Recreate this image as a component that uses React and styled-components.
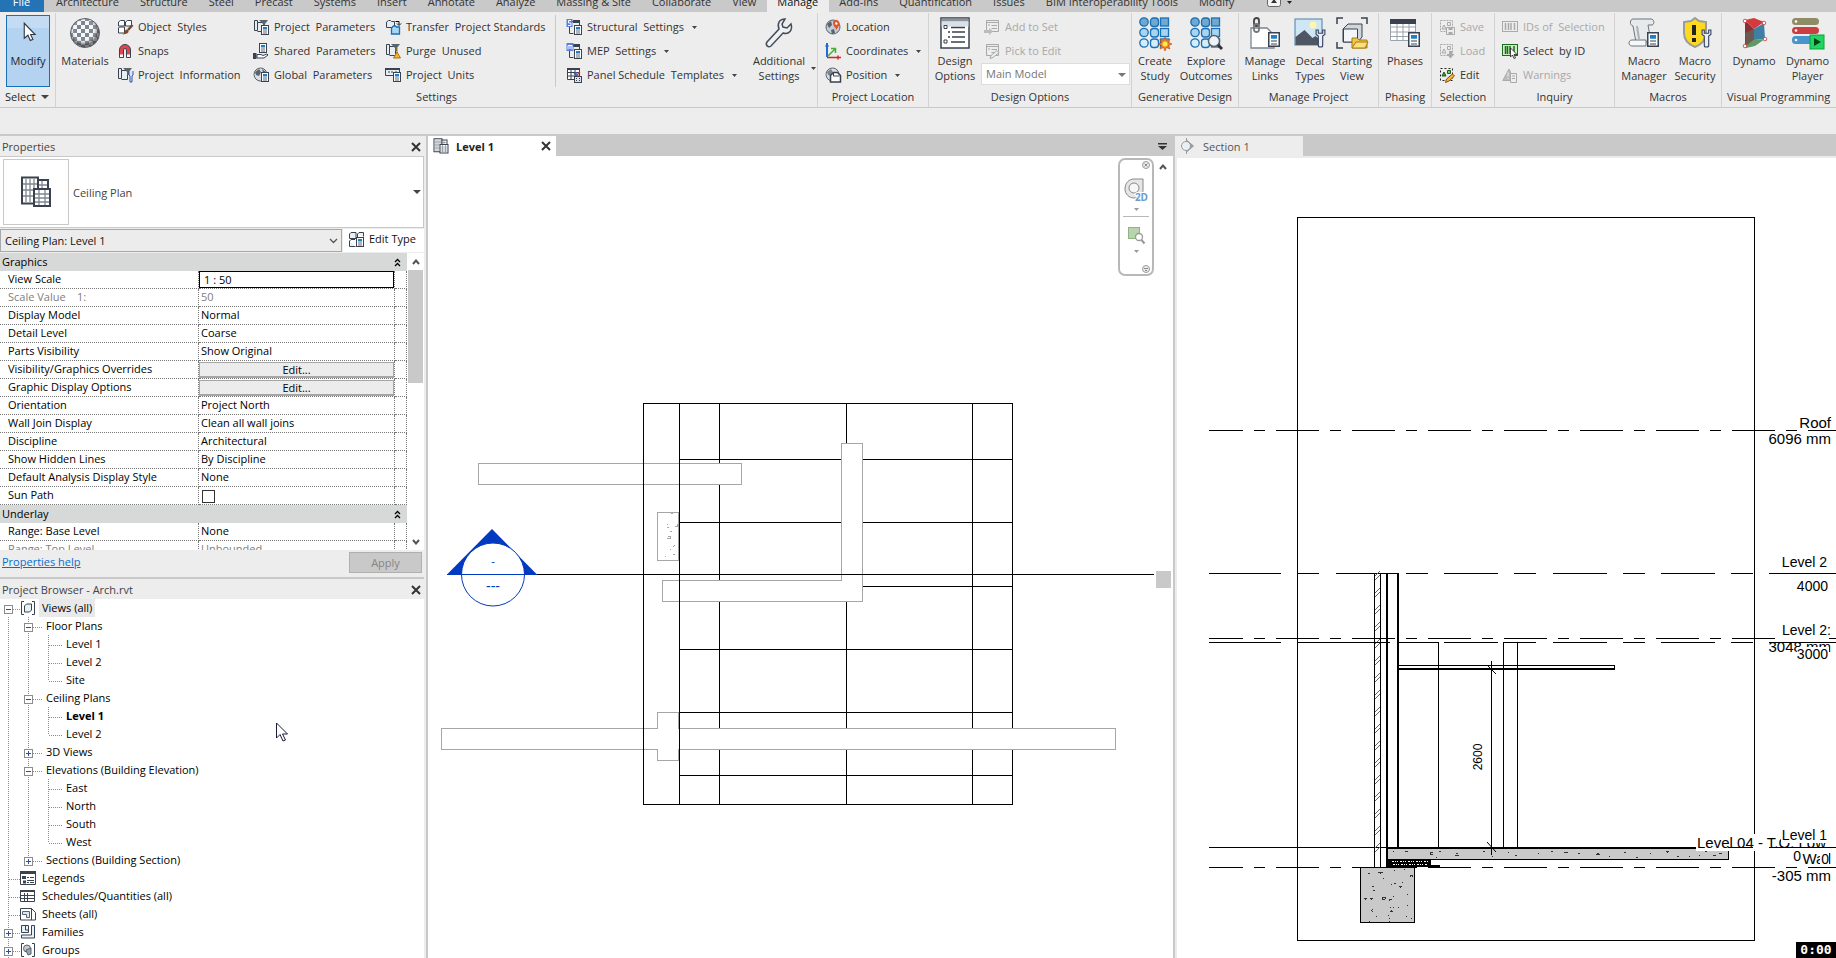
import { useState } from "react";
import styled, { createGlobalStyle } from "styled-components";

const GlobalStyle = createGlobalStyle`
  * { box-sizing: border-box; }
  html, body, #root { height: 100%; margin: 0; }
  body {
    background: #ededed;
    color: #262626;
    font-family: "Open Sans", "Noto Sans", sans-serif;
    font-size: 11px;
    line-height: 15px;
    overflow: hidden;
  }
  button, select, input { font: inherit; color: inherit; margin: 0; padding: 0; border: 0; background: none; border-radius: 0; }
  svg { display: block; flex: none; }
`;

const AppStyled = styled.div`
  display: flex;
  flex-direction: column;
  height: 100vh;
  position: relative;
`;

/* ---------- ribbon ---------- */

const TabStripStyled = styled.nav`
  display: flex;
  flex: none;
  align-items: flex-end;
  height: 12px;
  overflow: hidden;
  background: #c9c9c9;
`;

const TabStyled = styled.button`
  flex: none;
  height: 20px;
  padding: 0 11px 0 10px;
  line-height: 18px;
  color: ${({ $active, $file }) => ($file ? "#fff" : $active ? "#111" : "#333")};
  background: ${({ $active, $file }) => ($file ? "#2474b5" : $active ? "#ededed" : "transparent")};
  ${({ $file }) => $file && "width: 44px; margin-right: 2px;"}
`;

const TabToggleStyled = styled.button`
  display: flex;
  align-items: center;
  gap: 6px;
  height: 20px;
  margin-left: 22px;
`;

const RibbonStyled = styled.section`
  display: flex;
  flex: none;
  height: 96px;
  padding-top: 1px;
  border-bottom: 1px solid #c9c9c9;
  background: #ededed;
`;

const PanelStyled = styled.div`
  display: flex;
  flex: ${({ $w }) => ($w ? `0 0 ${$w}px` : "1 0 0")};
  flex-direction: column;
  justify-content: space-between;
  border-right: 1px solid ${({ $w }) => ($w ? "#d2d2d2" : "transparent")};
`;

const PanelBodyStyled = styled.div`
  display: flex;
  height: 74px;
  padding-top: 2px;
  padding-left: ${({ $pad }) => ($pad ? "4px" : "0")};
`;

const PanelTitleStyled = styled.div`
  height: 19px;
  line-height: 17px;
  text-align: center;
  white-space: nowrap;
  color: #333;
`;

const TitleMenuStyled = styled.button`
  display: flex;
  align-items: center;
  gap: 6px;
  height: 19px;
  padding-left: 5px;
  padding-bottom: 2px;
`;

const ModifyStyled = styled.button`
  display: flex;
  flex-direction: column;
  align-items: center;
  gap: 8px;
  width: 44px;
  height: 72px;
  margin-left: 6px;
  padding-top: 5px;
  border: 1px solid #1a70b8;
  background: linear-gradient(#c3dbf3 12px, #b3d3f0 12px);
`;

const BigButtonStyled = styled.button`
  display: flex;
  flex: 0 0 ${({ $w }) => $w}px;
  flex-direction: column;
  align-items: center;
  gap: 4px;
  height: 72px;
  padding-top: 2px;
  color: #333;
  white-space: nowrap;
`;

const BigLabelStyled = styled.span`
  display: flex;
  flex-direction: column;
  align-items: center;
`;

const CaretSlotStyled = styled.span`
  display: flex;
  align-items: flex-end;
  height: 72px;
  padding-bottom: 17px;
`;

const ColumnStyled = styled.div`
  display: grid;
  grid-template-rows: repeat(3, 24px);
  flex: 0 0 ${({ $w }) => $w}px;
`;

const SmallButtonStyled = styled.button`
  display: flex;
  align-items: center;
  gap: 5px;
  padding-left: 3px;
  white-space: pre;
  color: #333;

  &:disabled {
    color: #a8a8a8;
  }
`;

const SmallLabelStyled = styled.span`
  padding-bottom: 2px;
`;

const DividerStyled = styled.span`
  flex: 0 0 1px;
  height: 72px;
  margin-right: 7px;
  background: #c9c9c9;
`;

const SelectWrapStyled = styled.label`
  position: relative;
  display: block;
  min-width: 0;
  flex: ${({ $grow }) => ($grow ? 1 : "none")};
`;

const SelectStyled = styled.select`
  display: block;
  appearance: none;
  width: 100%;
  height: ${({ $ribbon }) => ($ribbon ? "22px" : "23px")};
  padding: ${({ $ribbon }) => ($ribbon ? "0 4px 2px" : "0 4px")};
  border: 1px solid ${({ $ribbon }) => ($ribbon ? "#dcdcdc" : "#a8a8a8")};
  background: ${({ $ribbon }) => ($ribbon ? "#fff" : "#ececec")};
  opacity: 1;
  color: ${({ $ribbon }) => ($ribbon ? "#757575" : "#111")};
`;

const SelectArrowStyled = styled.span`
  position: absolute;
  right: 4px;
  top: 0;
  display: flex;
  align-items: center;
  height: 100%;
  pointer-events: none;
`;

/* ---------- side palettes ---------- */

const WorkspaceStyled = styled.main`
  display: flex;
  flex: 1;
  min-height: 0;
  margin-top: 26px;
  border-top: 2px solid #c9c9c9;
`;

const SideStyled = styled.aside`
  display: flex;
  flex: 0 0 428px;
  flex-direction: column;
  min-height: 0;
  padding-right: 2px;
  border-right: 2px solid #c9c9c9;
`;

const PaletteHeaderStyled = styled.header`
  display: flex;
  flex: none;
  align-items: center;
  justify-content: space-between;
  height: 20px;
  padding: 1px 3px 0 2px;
  color: #444;
`;

const TypeBoxStyled = styled.div`
  display: flex;
  flex: none;
  align-items: center;
  height: 72px;
  padding: 2px;
  border: 1px solid #c9c9c9;
  border-left: 0;
  background: #fff;
  color: #444;
`;

const TypePreviewStyled = styled.div`
  display: grid;
  place-items: center;
  width: 66px;
  height: 66px;
  margin-left: 1px;
  border: 1px solid #c9c9c9;
`;

const TypeNameStyled = styled.span`
  flex: 1;
  padding-left: 4px;
`;

const InstanceRowStyled = styled.div`
  display: flex;
  flex: none;
  height: 25px;
  padding-top: 1px;
`;

const EditTypeStyled = styled.button`
  display: flex;
  align-items: center;
  gap: 5px;
  width: 81px;
  height: 23px;
  padding: 0 0 4px 5px;
  margin-left: 1px;
  background: #fff;
  color: #111;
  white-space: nowrap;
`;

const GridAreaStyled = styled.div`
  display: flex;
  flex: none;
  height: 297px;
  overflow: hidden;
  background: #fff;
`;

const PropTableStyled = styled.table`
  flex: 1;
  align-self: flex-start;
  border-collapse: separate;
  border-spacing: 0;
  table-layout: fixed;
  color: #000;

  td, th {
    height: 18px;
    padding: 0;
    line-height: 16px;
    font-weight: 400;
    text-align: left;
    white-space: pre;
    vertical-align: top;
  }
`;

const GroupCellStyled = styled.th`
  background: #d7d9d8;

  && {
    line-height: 18px;
    padding: 0 6px 0 2px;
  }
`;

const GroupTitleStyled = styled.span`
  display: flex;
  align-items: center;
  justify-content: space-between;
  height: 18px;
`;

const NameCellStyled = styled.th`
  border-right: 1px dotted #777;
  border-bottom: 1px dotted #777;
  color: ${({ $muted }) => ($muted ? "#808080" : "#000")};

  && {
    padding-left: 8px;
  }
`;

const ValueCellStyled = styled.td`
  border-right: 1px dotted #777;
  border-bottom: 1px dotted #777;
  color: ${({ $muted }) => ($muted ? "#808080" : "#000")};

  && {
    padding-left: ${({ $control }) => ($control ? "0" : "2px")};
  }
`;

const ScaleInputStyled = styled.input`
  display: block;
  width: 100%;
  height: 17px;
  padding-left: 4px;
  border: 1px solid #000;
`;

const EditButtonStyled = styled.button`
  display: block;
  width: 100%;
  height: 16px;
  margin-top: 1px;
  border: 1px solid #a6a6a6;
  border-bottom-width: 2px;
  background: #ececec;
  line-height: 13px;
`;

const CheckStyled = styled.input`
  display: block;
  appearance: none;
  width: 13px;
  height: 13px;
  margin: 3px 0 0 3px;
  border: 1px solid #333;
  background: #fff;
`;

const ScrollStyled = styled.div`
  display: flex;
  flex: 0 0 17px;
  flex-direction: column;
  align-items: center;
  padding: 6px 0 5px;
`;

const ThumbStyled = styled.span`
  width: 15px;
  height: 113px;
  margin: 5px 0 auto;
  background: #c9c9c9;
`;

const PaletteFooterStyled = styled.footer`
  display: flex;
  flex: none;
  justify-content: space-between;
  height: 29px;
  padding: 2px 2px 0;
  border-bottom: 2px solid #c9c9c9;
`;

const HelpLinkStyled = styled.a`
  color: #0a6cc9;
  padding-top: 2px;
`;

const ApplyStyled = styled.button`
  width: 73px;
  height: 21px;
  border: 1px solid #b0b0b0;
  background: #c9c9c9;
  color: #858585;
`;

const TreeStyled = styled.ul`
  flex: 1;
  min-height: 0;
  margin: 0;
  padding: 0;
  overflow: hidden;
  background: #fff;
  list-style: none;
  color: #000;
`;

const TreeRowStyled = styled.li`
  display: flex;
  height: 18px;
  font-weight: ${({ $bold }) => ($bold ? 700 : 400)};
`;

const dots = (dir) => `repeating-linear-gradient(${dir}, #8c8c8c 0 1px, transparent 1px 2px)`;

const GuideStyled = styled.span`
  display: flex;
  flex: 0 0 ${({ $wide }) => ($wide ? 23 : 20)}px;
  align-items: center;
  padding: 2px 0 0 4px;
  background:
    ${({ $line }) => ($line ? `${dots("to bottom")} 8px 0 / 1px ${$line === "half" ? "10px" : "100%"} no-repeat,` : "")}
    ${({ $branch }) => ($branch ? `${dots("to right")} 9px 10px / 100% 1px no-repeat` : "none")};
`;

const ExpanderStyled = styled.button`
  display: block;
`;

const TreeLabelStyled = styled.span`
  padding: 0 3px;
  line-height: 18px;
  white-space: nowrap;
  background: ${({ $selected }) => ($selected ? "#e9e9e9" : "transparent")};
`;

const TreeIconStyled = styled.span`
  display: flex;
  align-items: center;
  width: 19px;
`;

/* ---------- views ---------- */

const ViewStyled = styled.section`
  display: flex;
  flex: ${({ $w }) => ($w ? `0 0 ${$w}px` : "1 1 0")};
  flex-direction: column;
  min-width: 0;
  border-right: ${({ $w }) => ($w ? "0" : "2px solid #c9c9c9")};
`;

const ViewTabsStyled = styled.div`
  display: flex;
  flex: none;
  align-items: center;
  justify-content: space-between;
  height: 20px;
  padding-right: 6px;
  background: #c9c9c9;
`;

const ViewTabStyled = styled.div`
  display: flex;
  align-items: center;
  gap: 7px;
  width: 128px;
  height: 20px;
  padding: 0 5px;
  background: ${({ $active }) => ($active ? "#fff" : "#ededed")};
  color: ${({ $active }) => ($active ? "#222" : "#555")};
  font-weight: ${({ $active }) => ($active ? 700 : 400)};
`;

const TabNameStyled = styled.span`
  flex: 1;
`;

const CanvasStyled = styled.div`
  position: relative;
  flex: 1;
  min-height: 0;
  overflow: hidden;
  background: #fff;
  border-top: ${({ $framed }) => ($framed ? "2px solid #ececec" : "0")};
  border-left: ${({ $framed }) => ($framed ? "2px solid #ececec" : "0")};
`;

const DrawingStyled = styled.svg`
  width: 100%;
  height: 100%;
  font-family: "Liberation Sans", Arial, sans-serif;
`;

const NavBarStyled = styled.div`
  position: absolute;
  top: 2px;
  right: 19px;
  display: flex;
  flex-direction: column;
  align-items: center;
  width: 36px;
  height: 118px;
  padding: 1px 0;
  border: 2px solid #b8b8b8;
  border-radius: 7px;
  background: #fff;
`;

const NavEndStyled = styled.button`
  align-self: flex-end;
  margin-right: 2px;
`;

const NavToolStyled = styled.button`
  display: flex;
  flex-direction: column;
  align-items: center;
  gap: 6px;
  width: 26px;
  height: 48px;
  padding-top: 9px;
  border-bottom: ${({ $rule }) => ($rule ? "1px solid #b8b8b8" : "0")};
`;

const ViewScrollStyled = styled.div`
  position: absolute;
  top: 0;
  right: 2px;
  bottom: 0;
  display: flex;
  flex-direction: column;
  align-items: center;
  width: 16px;
  padding-top: 8px;
  pointer-events: none;
`;

const ViewThumbStyled = styled.span`
  width: 15px;
  height: 17px;
  margin-top: 401px;
  background: #c9c9c9;
`;

const TimerStyled = styled.div`
  position: absolute;
  right: 0;
  bottom: 0;
  width: 40px;
  height: 16px;
  background: #000;
  color: #fff;
  font: 700 13px/15px "DejaVu Sans Mono", monospace;
  text-align: center;
`;

const PointerStyled = styled.span`
  position: absolute;
  left: 276px;
  top: 722px;
  pointer-events: none;
`;

/* ---------- icons ---------- */

const D = "#39424e";

const SheetBadge = ({ x, y, s = 1 }) => (
  <g transform={`translate(${x} ${y}) scale(${s})`}>
    <rect x=".5" y=".5" width="7" height="9" fill="#fff" stroke={D} />
    <rect x="2" y="2" width="4" height="2.5" fill="#1f7fc9" />
    <path d="M2 6h4M2 8h4" stroke={D} strokeWidth=".8" />
  </g>
);

const Folded = (
  <>
    <path d="M1.500 1.500h3v10h-3zM4.500 3.500h6M4.500 12.500h6v-9" fill="#e4eef5" stroke={D} />
    <path d="M6 1h9l-3 4v3h-2V5z" fill="#5b6570" />
  </>
);

const PersonBox = (
  <>
    <rect x="1.500" y="1.500" width="12" height="11" fill="none" stroke="currentColor" strokeDasharray="2 1" />
    <path d="M3 10l2-4 2 4zM8.500 3.500h3v3h-3z" fill="none" stroke="currentColor" />
  </>
);

const ListSheet = (
  <>
    <path d="M2.500 1.500h12v11h-12zM2.500 3.500h12" fill="none" stroke="currentColor" />
    <path d="M4 6h2M7.500 6.500H13M7.500 9.500H13" stroke="currentColor" fill="none" />
  </>
);

const smallIcons = {
  objectStyles: (
    <>
      <path d="M1.500 3l2-1.500h4v5.500h-6zM8.500 3l2-1.500h4V7h-6zM1.500 9l1-1h5v6h-6z" fill="#fff" stroke={D} />
      <path d="M15.500 6l-4.500 5" stroke="#6b4a34" strokeWidth="2.500" />
      <path d="M5 15.500c3 0 2-5 5-5 3 1 2 5-5 5z" fill="#8a4426" />
    </>
  ),
  snaps: (
    <>
      <path d="M2.500 14.500V7a5.500 5.500 0 0 1 11 0v7.500h-4V7a1.500 1.500 0 0 0-3 0v7.500z" fill="#e0474c" stroke={D} />
      <path d="M3 11.500h3V14H3zM10 11.500h3V14h-3z" fill="#fff" />
    </>
  ),
  projectInfo: (
    <>
      {Folded}
      <path d="M12 4v4l1 1v6h2V9l1-1V4" fill="#dbe8fb" stroke="#2f55a0" />
    </>
  ),
  projectParams: (
    <>
      {Folded}
      <SheetBadge x={8} y={6} />
    </>
  ),
  sharedParams: (
    <>
      <SheetBadge x={6} y={0} />
      <path d="M4 11.500h4l2 1 4-1.500 1 1-4 3H4z" fill="#fff" stroke={D} />
      <path d="M0 10h3.500v6H0z" fill={D} />
    </>
  ),
  globalParams: (
    <>
      <circle cx="7.500" cy="7.500" r="6.500" fill="#d9dfe4" stroke="#59636d" />
      <path d="M2 5l4-3 2 3-2 4-3-1zM9 2l4 3-3 1z" fill="#59636d" />
      <SheetBadge x={8} y={5} />
    </>
  ),
  transfer: (
    <>
      <path d="M1.500 3l2-1.500h2l1 1h3v6h-8z" fill="#e4eef5" stroke={D} />
      <path d="M6.500 9l2-2h2l1 1h3v7h-8z" fill="#a9d6f7" stroke="#1a70b8" strokeWidth="1.300" />
      <path d="M10.500 2.500H14v3M12 4.500l2 2 2-2" fill="none" stroke="#000" />
    </>
  ),
  purge: (
    <>
      {Folded}
      <path d="M12 5v5M12 9l-3.500 6h7z" fill="#f7b32b" stroke="#a8731a" />
    </>
  ),
  units: (
    <>
      <path d="M.5 2.500h14v6H.5z" fill="#e4eef5" stroke={D} />
      <path d="M3 5h2M7 4v2M10 5h2" stroke={D} />
      <path d="M0 1h15v2H0z" fill={D} />
      <SheetBadge x={8} y={5} />
    </>
  ),
  structural: (
    <>
      <path d="M4.500 2.500h9v4M3.500 8v6.500h4" fill="none" stroke={D} />
      <path d="M7 1h7v3H7z" fill={D} />
      <rect x=".5" y="0" width="6" height="8" fill="#5b7fe0" />
      <path d="M5 1.500H2.500V4H5v2.500H2" fill="none" stroke="#fff" />
      <SheetBadge x={8} y={6} />
    </>
  ),
  mep: (
    <>
      <path d="M4.500 2.500h9v4M3.500 8v6.500h4" fill="none" stroke={D} />
      <path d="M7 1h7v3H7z" fill={D} />
      <rect x=".5" y="0" width="7" height="8" fill="#5b7fe0" />
      <path d="M2 6.500v-4h4v4M4 3v3" fill="none" stroke="#fff" />
      <SheetBadge x={8} y={6} />
    </>
  ),
  panelSchedule: (
    <>
      <path d="M1.500 2.500h12v10h-12zM1.500 5.500h12M1.500 9h12M5 2.500v10M9 2.500v10" fill="#fff" stroke={D} />
      <path d="M1 1h13v2H1z" fill={D} />
      <path d="M14 5l-5 5" stroke="#d33" strokeWidth="1.500" />
      <path d="M10 5v4M8 6l3 3" stroke="#3b5bd8" strokeWidth="1.500" />
      <rect x="8.500" y="9.500" width="7" height="6" fill="#dde3e8" stroke={D} />
      <path d="M10 11.500h1M13 11.500h1M10 13.500h1M13 13.500h1" stroke={D} />
    </>
  ),
  location: (
    <>
      <circle cx="8" cy="8" r="7" fill="#c3ccd4" stroke="#59636d" />
      <path d="M2 5l4-3 1 4-3 3zM6 11l3-1 1 4-3 1z" fill="#59636d" />
      <path d="M11 1a3.500 3.500 0 0 1 3.500 3.500C14.500 7 12 9 11.500 11 11 9 8 7 8 4.500A3.200 3.200 0 0 1 11 1z" fill="#e2552b" />
      <circle cx="11.300" cy="4.500" r="1.200" fill="#fff" />
    </>
  ),
  coordinates: (
    <>
      <path d="M2 0v14" stroke="#1f6fd0" strokeWidth="2" />
      <path d="M0 3h4" stroke="#1f6fd0" />
      <path d="M2 14.500h14M13 12.500v4" stroke="#d22" strokeWidth="1.500" />
      <path d="M3 13l7-7M6 5.500h4.500V10" stroke="#4cae3a" fill="none" strokeWidth="1.500" />
    </>
  ),
  position: (
    <>
      <circle cx="7.500" cy="7.500" r="6.500" fill="#d9dfe4" stroke="#59636d" />
      <path d="M2 5l4-3 2 3-2 4-3-1z" fill="#7b858e" />
      <path d="M5.500 8.500l3-3h4l3 3v6.500h-10z" fill="#fff" stroke={D} strokeWidth="1.500" />
      <path d="M8.500 6v3h6" fill="none" stroke={D} />
    </>
  ),
  addSet: (
    <>
      {ListSheet}
      <path d="M0 11h5V9l4 3.500L5 16v-2H0z" fill="#bbb" />
    </>
  ),
  pickEdit: (
    <>
      {ListSheet}
      <path d="M6 15.500l1-3 6-5 2 2-6 5z" fill="#ededed" stroke="#aaa" />
    </>
  ),
  save: (
    <>
      {PersonBox}
      <path d="M7.500 8.500h8v7h-8z" fill="#ededed" stroke="#aaa" />
      <path d="M9.500 9h4v2h-4zM9.500 13h4v2.500h-4z" fill="#aaa" />
    </>
  ),
  load: (
    <>
      {PersonBox}
      <path d="M10 8h3v3h2.500l-4 4.500-4-4.500H10z" fill="#aaa" />
    </>
  ),
  edit: (
    <>
      <rect x="1.500" y="1.500" width="12" height="12" fill="none" stroke="#222" strokeDasharray="2 2" />
      <path d="M3 9l2-4 2 4z" fill="#3a9a3a" stroke="#1c5c1c" />
      <path d="M8.500 3.500h3v3h-3z" fill="#7cc47c" stroke="#1c5c1c" />
      <path d="M6.500 15.500l1-3.500 6-5 2 2-5.500 5z" fill="#f6b73c" stroke="#8a4b12" />
    </>
  ),
  ids: (
    <>
      <rect x=".5" y="2.500" width="15" height="10" fill="none" stroke="#aaa" />
      <path d="M3.500 4v7M6.500 4v7M9 4v7M12.500 4v7" stroke="#aaa" strokeWidth="1.500" />
    </>
  ),
  selectId: (
    <>
      <rect x=".5" y="1.500" width="15" height="11" fill="#c9f0c0" stroke="#1c6b1c" />
      <path d="M3.500 3v8M5.500 3v8M8 3v8M12 3v8" stroke="#1c6b1c" strokeWidth="1.500" />
      <path d="M8.500 5v9l2-2 1.500 3.500 1.500-.5-1.500-3.500h3z" fill="#fff" stroke="#222" strokeWidth=".8" />
    </>
  ),
  warnings: (
    <>
      <path d="M7 2L.8 13.500h8V6z" fill="#bbb" stroke="#aaa" />
      <path d="M6 5.500v4M6 11v1" stroke="#ededed" />
      <path d="M8.500 6.500h6v9h-6zM10 9h3M10 11.500h3" fill="#ededed" stroke="#aaa" />
    </>
  ),
  typeBadge: (
    <>
      <path d="M1.500 3l1.500-1.500h5v6h-6.500zM9.500 3L11 1.500h4.500v4M1.500 10L3 8.500h4M1.500 10v5.500h6M9.500 3v3" fill="#e6f2f8" stroke={D} />
      <SheetBadge x={8} y={6} />
    </>
  ),
};

const Shield = "M16 1l4 3 7 1v11c0 8-6 12-11 14C11 28 5 24 5 16V5l7-1z";

const wrench = (x, y, s = 1) => (
  <path
    transform={`translate(${x} ${y}) scale(${s})`}
    d="M1 0v4l2 1.500V14c0 2 4 2 4 0V5.500L9 4V0L7 0v3H3V0z"
    fill="#e8effa"
    stroke="#33415e"
  />
);

const studyDots = (
  <>
    {[0, 1, 2].map((r) => (
      <g key={r} fill={["#6fa9cf", "#a9d4ef", "#d3edfa"][r]} stroke="#1a6fb5" strokeWidth="1.300">
        <circle cx="5" cy={5 + r * 10.5} r="4.200" />
        <rect x="11.500" y={1 + r * 10.5} width="8" height="8.500" rx="3" />
        <rect x="21.500" y={1 + r * 10.5} width="8" height="8" />
      </g>
    ))}
  </>
);

const bigIcons = {
  cursor: <path d="M11 3v20l5-4 3 7 3.500-1.500-3-6.500h6z" fill="#fff" stroke="#333b46" strokeWidth="1.500" />,
  materials: (
    <>
      <defs>
        <pattern id="checker" width="8" height="8" patternUnits="userSpaceOnUse">
          <rect width="8" height="8" fill="#f6f7f8" />
          <path d="M0 0h4v4H0zM4 4h4v4H4z" fill="#7d8590" />
        </pattern>
        <radialGradient id="ball" cx=".45" cy=".4">
          <stop offset=".6" stopColor="#fff" stopOpacity="0" />
          <stop offset="1" stopColor="#333" stopOpacity=".6" />
        </radialGradient>
      </defs>
      <circle cx="16" cy="16" r="14.500" fill="url(#checker)" />
      <circle cx="16" cy="16" r="14.500" fill="url(#ball)" stroke="#5b636d" />
    </>
  ),
  wrench: (
    <path
      d="M22 2c-6 0-8 5-6 10L4 25c-2 3 1 6 4 4l12-13c6 2 10-3 8-9l-4 4-4-1-1-3z"
      fill="#eef1f4"
      stroke="#444c57"
      strokeWidth="1.500"
    />
  ),
  options: (
    <>
      <rect x="2" y="1" width="28" height="30" fill="#fff" stroke={D} strokeWidth="1.500" />
      <path d="M2.500 1.500h27v3h-27z" fill="#8b949e" />
      <path d="M2.500 4.500h27v5h-27z" fill="#d9e0e6" />
      <path d="M5 8.500h3v3H5zM5 23h3v3H5z" fill="#fff" stroke={D} />
      <path d="M12 10.500h14M9 15h2M13 15h13M9 20h2M13 20h13M12 25h14" stroke={D} strokeWidth="1.500" />
    </>
  ),
  study: (
    <>
      {studyDots}
      <path d="M26 20l1.500 3.500L31 22l-1.500 3.500L33 27l-3.500 1.500L31 32l-3.500-1.500L26 34l-1.500-3.500L21 32l1.500-3.500L19 27l3.500-1.500L21 22l3.500 1.500z" fill="#f58220" stroke="#b3471a" strokeWidth=".6" />
      <circle cx="26" cy="27" r="2.500" fill="#ffe94d" />
    </>
  ),
  explore: (
    <>
      {studyDots}
      <circle cx="24" cy="24" r="5.500" fill="#eef3f7" stroke="#59636d" strokeWidth="1.500" />
      <path d="M28 28l4 4" stroke="#333" strokeWidth="3" />
    </>
  ),
  links: (
    <>
      <path d="M2 11h16l7 7v13H2z" fill="#fff" stroke="#7b858e" strokeWidth="1.300" />
      <rect x="5" y="1" width="5" height="8" rx="2.500" fill="none" stroke="#444" strokeWidth="1.800" />
      <rect x="5" y="7" width="5" height="8" rx="2.500" fill="none" stroke="#777" strokeWidth="1.800" />
      <SheetBadge x={19} y={15} s={1.5} />
    </>
  ),
  decal: (
    <>
      <rect x="1" y="2" width="27" height="26" fill="#cfe6f5" stroke="#4e7fa8" />
      <circle cx="19" cy="8" r="3.500" fill="#fff6a8" />
      <path d="M1.500 20l9-7 8 8 3-2 6 5v4h-26z" fill="#4d5662" />
      {wrench(21, 13, 1.1)}
    </>
  ),
  starting: (
    <>
      <path d="M1 7V1h6M25 1h6v6M1 25v6h6" fill="none" stroke={D} strokeWidth="1.500" />
      <path d="M7 12l5-5h14v13l-4 5H7z" fill="#cfd6dc" stroke={D} />
      <path d="M7.500 12h14v13h-14z" fill="#f3f6f8" stroke={D} />
      <path d="M16 21h5l2 2h8v8H16z" fill="#f4c542" stroke="#a37c14" />
      <path d="M16 31l4-6h12l-3 6z" fill="#ffe07a" stroke="#a37c14" />
    </>
  ),
  phases: (
    <>
      <path d="M1.500 2.500h25v21h-25zM1.500 10h25M1.500 15h25M1.500 19.500h25M8 7v16M14 7v16M20 7v16" fill="#fff" stroke="#9aa3ab" />
      <path d="M1 2h26v5H1z" fill={D} />
      <SheetBadge x={19} y={15} s={1.5} />
    </>
  ),
  macroManager: (
    <>
      <path d="M5 2h18c3 0 4 5 1 6h-4l3 17H8L5 9C1 8 2 2 5 2z" fill="#e7eaed" stroke="#6b7580" />
      <path d="M4 23h14v6H4c-4 0-4-6 0-6z" fill="#f6f7f8" stroke="#6b7580" />
      <path d="M9 9l2 13" stroke="#aab2b9" strokeWidth="2" />
      <SheetBadge x={19} y={15} s={1.5} />
    </>
  ),
  macroSecurity: (
    <>
      <path d={Shield} fill="#ffd91f" stroke="#9b9b9b" strokeWidth="2" />
      <path d="M15 8v10M15 21v4" stroke="#222" strokeWidth="4" />
      {wrench(22, 13, 1.1)}
    </>
  ),
  dynamo: (
    <>
      <path d="M7 3l9 9-9 17z" fill="#8d2e38" />
      <path d="M7 3l9 9 10-7-10-4z" fill="#d23a3e" />
      <path d="M16 12L26 6l1 16-11 1z" fill="#3f7fa3" />
      <path d="M7 29l9-6 11-1-10 7-9 2z" fill="#5f9a62" />
      <path d="M7 16l9-4v11L8 29z" fill="#6b5a52" />
      <g fill="#fff" stroke="#c33" strokeWidth=".8">
        <circle cx="7" cy="4" r="1.800" />
        <circle cx="26" cy="6" r="1.800" />
        <circle cx="27" cy="22" r="1.800" />
        <circle cx="7" cy="29" r="1.800" />
      </g>
    </>
  ),
  player: (
    <>
      <rect x="0" y="1" width="27" height="7" rx="3.500" fill="#8f8b66" />
      <rect x="0" y="10" width="27" height="7" rx="3.500" fill="#cc3d42" />
      <rect x="0" y="19" width="24" height="8" rx="3.500" fill="#4795cb" />
      <g fill="#fff">
        <circle cx="4" cy="4.500" r="1.300" />
        <circle cx="4" cy="13.500" r="1.300" />
        <circle cx="4" cy="23" r="1.300" />
      </g>
      <rect x="18" y="18" width="14" height="14" fill="#1fd760" stroke="#12a03f" />
      <path d="M22 21v8l7-4z" fill="#0a3d1c" />
    </>
  ),
};

const treeIcons = {
  views: (
    <>
      <path d="M4 1.500H1.500v13H4M12 1.500h2.500v13H12" fill="none" stroke={D} />
      <path d="M4.500 6l2-2h5v6l-2 2h-5z" fill="#e6f2f8" stroke={D} />
    </>
  ),
  legends: (
    <>
      <path d="M.5 1.500h15v13H.5z" fill="#fff" stroke={D} />
      <path d="M0 1h16v3H0z" fill={D} />
      <path d="M2 6h4v3H2zM3 10.500h3v3H3z" fill={D} />
      <path d="M7 7.500h2M10 7.500h4M7 10.500h7M7 12.500h2M10 12.500h4" stroke={D} />
    </>
  ),
  schedules: (
    <>
      <path d="M.5 2.500h14v11H.5zM.5 7.500h14M.5 10.500h14M4.500 5v8M7.500 5v8" fill="#fff" stroke={D} />
      <path d="M0 2h15v2H0z" fill={D} />
    </>
  ),
  sheets: (
    <>
      <path d="M.5 2.500h11l4 4v7.500H.5zM11.500 2.500v11.500" fill="#fff" stroke={D} />
      <path d="M2.500 5.500h7v6h-3v-3h-4z" fill="#dfe7ee" stroke="#59636d" />
    </>
  ),
  families: (
    <>
      <path d="M1.500 1.500h7v7h-7zM11.500 1.500h3v12.500h-13v-3h10z" fill="#e6f2f8" stroke={D} />
      <path d="M5.500 2v4h3" fill="none" stroke={D} />
    </>
  ),
  groups: (
    <>
      <path d="M4 1.500H1.500v13H4M12 1.500h2.500v13H12" fill="none" stroke={D} />
      <circle cx="7" cy="6.500" r="3.500" fill="#c5ccd3" stroke="#59636d" />
      <path d="M6 8l5-2v6l-3 1z" fill="#9aa5af" stroke="#59636d" />
    </>
  ),
};

const Icon = ({ set, name, size = 16, box = size }) => (
  <svg width={size} height={size} viewBox={`0 0 ${box} ${box}`} overflow="visible" aria-hidden="true">
    {set[name]}
  </svg>
);

const Caret = ({ w = 5, color = "#444" }) => (
  <svg width={w} height={Math.ceil(w / 2)} viewBox="0 0 6 3" preserveAspectRatio="none" aria-hidden="true">
    <path d="M0 0h6L3 3z" fill={color} />
  </svg>
);

const Chevron = ({ up, color = "#555" }) => (
  <svg width="8" height="6" viewBox="0 0 8 6" aria-hidden="true">
    <path d={up ? "M1 5l3-3.500L7 5" : "M1 1l3 3.500L7 1"} fill="none" stroke={color} strokeWidth="2" />
  </svg>
);

const Cross = ({ size = 10 }) => (
  <svg width={size} height={size} viewBox="0 0 10 10" aria-hidden="true">
    <path d="M1 1l8 8M9 1L1 9" stroke="#333" strokeWidth="2" />
  </svg>
);

const PlanIcon = ({ size }) => (
  <svg width={size} height={size} viewBox="0 0 32 32" aria-hidden="true">
    <path d="M2 2h17v2h9v26H13v-2H2z" fill="#7b858e" opacity=".5" />
    <rect x="2" y="1.500" width="16" height="26" fill="#fff" stroke={D} strokeWidth="2" />
    <rect x="18" y="4" width="10" height="12" fill="#fff" stroke={D} strokeWidth="2" />
    <path d="M6 3v23M10 3v23M14 3v10M3 8h14M3 14h12M3 20h11M22 5v8M19 9h8" stroke="#7f8890" strokeWidth="1.300" />
    <rect x="14" y="13" width="16" height="17" fill="#fff" stroke={D} strokeWidth="2" />
    <path d="M19 14v15M25 14v15M15 18h14M15 22h14M15 26h14" stroke="#7f8890" strokeWidth="1.300" />
  </svg>
);

/* ---------- data ---------- */

const tabs = [
  "Architecture", "Structure", "Steel", "Precast", "Systems", "Insert", "Annotate", "Analyze",
  "Massing & Site", "Collaborate", "View", "Manage", "Add-Ins", "Quantification", "Issues",
  "BIM Interoperability Tools", "Modify",
];

const settingsColumns = [
  { w: 136, items: [["objectStyles", "Object  Styles"], ["snaps", "Snaps"], ["projectInfo", "Project  Information"]] },
  { w: 132, items: [["projectParams", "Project  Parameters"], ["sharedParams", "Shared  Parameters"], ["globalParams", "Global  Parameters"]] },
  { w: 173, items: [["transfer", "Transfer  Project Standards"], ["purge", "Purge  Unused"], ["units", "Project  Units"]] },
];

const panels = [
  { w: 107, title: "Generative Design", big: [["study", 46, "Create", "Study"], ["explore", 56, "Explore", "Outcomes"]] },
  { w: 140, title: "Manage Project", big: [["links", 52, "Manage", "Links"], ["decal", 38, "Decal", "Types"], ["starting", 46, "Starting", "View"]] },
  { w: 52, title: "Phasing", big: [["phases", 52, "Phases"]] },
  { w: 63, title: "Selection", small: [["save", "Save", true], ["load", "Load", true], ["edit", "Edit"]] },
  { w: 120, title: "Inquiry", small: [["ids", "IDs of  Selection", true], ["selectId", "Select  by ID"], ["warnings", "Warnings", true]] },
  { w: 107, title: "Macros", big: [["macroManager", 58, "Macro", "Manager"], ["macroSecurity", 44, "Macro", "Security"]] },
  { title: "Visual Programming", big: [["dynamo", 64, "Dynamo"], ["player", 42, "Dynamo", "Player"]] },
];

const properties = [
  { group: "Graphics" },
  { name: "View Scale", value: "1 : 50", kind: "input" },
  { name: "Scale Value    1:", value: "50", muted: true },
  { name: "Display Model", value: "Normal" },
  { name: "Detail Level", value: "Coarse" },
  { name: "Parts Visibility", value: "Show Original" },
  { name: "Visibility/Graphics Overrides", value: "Edit...", kind: "button" },
  { name: "Graphic Display Options", value: "Edit...", kind: "button" },
  { name: "Orientation", value: "Project North" },
  { name: "Wall Join Display", value: "Clean all wall joins" },
  { name: "Discipline", value: "Architectural" },
  { name: "Show Hidden Lines", value: "By Discipline" },
  { name: "Default Analysis Display Style", value: "None" },
  { name: "Sun Path", kind: "check" },
  { group: "Underlay" },
  { name: "Range: Base Level", value: "None" },
  { name: "Range: Top Level", value: "Unbounded", muted: true },
];

// open: true = expanded, false = collapsed, undefined = leaf
const tree = [
  { depth: 0, label: "Views (all)", icon: "views", open: true, selected: true },
  { depth: 1, label: "Floor Plans", open: true },
  { depth: 2, label: "Level 1" },
  { depth: 2, label: "Level 2" },
  { depth: 2, label: "Site", last: true },
  { depth: 1, label: "Ceiling Plans", open: true },
  { depth: 2, label: "Level 1", bold: true },
  { depth: 2, label: "Level 2", last: true },
  { depth: 1, label: "3D Views", open: false },
  { depth: 1, label: "Elevations (Building Elevation)", open: true },
  { depth: 2, label: "East" },
  { depth: 2, label: "North" },
  { depth: 2, label: "South" },
  { depth: 2, label: "West", last: true },
  { depth: 1, label: "Sections (Building Section)", open: false, last: true },
  { depth: 0, label: "Legends", icon: "legends" },
  { depth: 0, label: "Schedules/Quantities (all)", icon: "schedules" },
  { depth: 0, label: "Sheets (all)", icon: "sheets" },
  { depth: 0, label: "Families", icon: "families", open: false },
  { depth: 0, label: "Groups", icon: "groups", open: false },
];

/* ---------- ribbon components ---------- */

const BigButton = ({ icon, w, lines }) => (
  <BigButtonStyled $w={w}>
    <Icon set={bigIcons} name={icon} size={32} />
    <BigLabelStyled>
      {lines.map((line) => (
        <span key={line}>{line}</span>
      ))}
    </BigLabelStyled>
  </BigButtonStyled>
);

const SmallButton = ({ icon, label, disabled, menu }) => (
  <SmallButtonStyled disabled={disabled}>
    <Icon set={smallIcons} name={icon} />
    <SmallLabelStyled>{label}</SmallLabelStyled>
    {menu && <Caret />}
  </SmallButtonStyled>
);

const Ribbon = () => (
  <RibbonStyled>
    <PanelStyled $w={56}>
      <PanelBodyStyled>
        <ModifyStyled>
          <Icon set={bigIcons} name="cursor" size={24} box={32} />
          Modify
        </ModifyStyled>
      </PanelBodyStyled>
      <TitleMenuStyled>
        Select <Caret w={8} />
      </TitleMenuStyled>
    </PanelStyled>

    <PanelStyled $w={762}>
      <PanelBodyStyled>
        <BigButton icon="materials" w={58} lines={["Materials"]} />
        {settingsColumns.map((col) => (
          <ColumnStyled key={col.w} $w={col.w}>
            {col.items.map(([icon, label]) => (
              <SmallButton key={icon} icon={icon} label={label} />
            ))}
          </ColumnStyled>
        ))}
        <DividerStyled />
        <ColumnStyled $w={184}>
          <SmallButton icon="structural" label="Structural  Settings " menu />
          <SmallButton icon="mep" label="MEP  Settings " menu />
          <SmallButton icon="panelSchedule" label="Panel Schedule  Templates " menu />
        </ColumnStyled>
        <BigButton icon="wrench" w={64} lines={["Additional", "Settings"]} />
        <CaretSlotStyled>
          <Caret />
        </CaretSlotStyled>
      </PanelBodyStyled>
      <PanelTitleStyled>Settings</PanelTitleStyled>
    </PanelStyled>

    <PanelStyled $w={111}>
      <PanelBodyStyled $pad>
        <ColumnStyled $w={100}>
          <SmallButton icon="location" label="Location" />
          <SmallButton icon="coordinates" label="Coordinates " menu />
          <SmallButton icon="position" label="Position " menu />
        </ColumnStyled>
      </PanelBodyStyled>
      <PanelTitleStyled>Project Location</PanelTitleStyled>
    </PanelStyled>

    <PanelStyled $w={203}>
      <PanelBodyStyled>
        <BigButton icon="options" w={52} lines={["Design", "Options"]} />
        <ColumnStyled $w={149}>
          <SmallButton icon="addSet" label="Add to Set" disabled />
          <SmallButton icon="pickEdit" label="Pick to Edit" disabled />
          <SelectWrapStyled>
            <SelectStyled $ribbon disabled aria-label="Active design option">
              <option>Main Model</option>
            </SelectStyled>
            <SelectArrowStyled>
              <Caret w={8} color="#777" />
            </SelectArrowStyled>
          </SelectWrapStyled>
        </ColumnStyled>
      </PanelBodyStyled>
      <PanelTitleStyled>Design Options</PanelTitleStyled>
    </PanelStyled>

    {panels.map((panel) => (
      <PanelStyled key={panel.title} $w={panel.w}>
        <PanelBodyStyled $pad={Boolean(panel.small)}>
          {panel.big?.map(([icon, w, ...lines]) => (
            <BigButton key={icon} icon={icon} w={w} lines={lines} />
          ))}
          {panel.small && (
            <ColumnStyled $w={panel.w - 5}>
              {panel.small.map(([icon, label, disabled]) => (
                <SmallButton key={icon} icon={icon} label={label} disabled={disabled} />
              ))}
            </ColumnStyled>
          )}
        </PanelBodyStyled>
        <PanelTitleStyled>{panel.title}</PanelTitleStyled>
      </PanelStyled>
    ))}
  </RibbonStyled>
);

/* ---------- palettes ---------- */

const PropertyValue = ({ row }) => {
  const [checked, setChecked] = useState(false);

  if (row.kind === "input") {
    return <ScaleInputStyled defaultValue={row.value} aria-label={row.name} />;
  }
  if (row.kind === "button") {
    return <EditButtonStyled aria-label={`${row.name} ${row.value}`}>{row.value}</EditButtonStyled>;
  }
  if (row.kind === "check") {
    return (
      <CheckStyled type="checkbox" aria-label={row.name} checked={checked} onChange={() => setChecked(!checked)} />
    );
  }
  return row.value;
};

const PropertiesPalette = () => (
  <>
    <PaletteHeaderStyled>
      Properties
      <button aria-label="Close properties">
        <Cross />
      </button>
    </PaletteHeaderStyled>
    <TypeBoxStyled>
      <TypePreviewStyled>
        <PlanIcon size={32} />
      </TypePreviewStyled>
      <TypeNameStyled>Ceiling Plan</TypeNameStyled>
      <Caret w={8} />
    </TypeBoxStyled>
    <InstanceRowStyled>
      <SelectWrapStyled $grow>
        <SelectStyled aria-label="Instance">
          <option>Ceiling Plan: Level 1</option>
        </SelectStyled>
        <SelectArrowStyled>
          <svg width="9" height="6" viewBox="0 0 9 6" aria-hidden="true">
            <path d="M1 1l3.500 3.500L8 1" fill="none" stroke="#555" strokeWidth="1.300" />
          </svg>
        </SelectArrowStyled>
      </SelectWrapStyled>
      <EditTypeStyled>
        <Icon set={smallIcons} name="typeBadge" />
        Edit Type
      </EditTypeStyled>
    </InstanceRowStyled>
    <GridAreaStyled>
      <PropTableStyled>
        <colgroup>
          <col width="199" />
          <col width="196" />
          <col width="12" />
        </colgroup>
        <tbody>
          {properties.map((row) =>
            row.group ? (
              <tr key={row.group}>
                <GroupCellStyled colSpan={3}>
                  <GroupTitleStyled>
                    {row.group}
                    <svg width="7" height="9" viewBox="0 0 7 9" aria-hidden="true">
                      <path d="M1 4l2.500-2.500L6 4M1 8l2.500-2.500L6 8" fill="none" stroke="#000" strokeWidth="1.300" />
                    </svg>
                  </GroupTitleStyled>
                </GroupCellStyled>
              </tr>
            ) : (
              <tr key={row.name}>
                <NameCellStyled scope="row" $muted={row.muted}>{row.name}</NameCellStyled>
                <ValueCellStyled $muted={row.muted} $control={Boolean(row.kind)}>
                  <PropertyValue row={row} />
                </ValueCellStyled>
                <ValueCellStyled />
              </tr>
            )
          )}
        </tbody>
      </PropTableStyled>
      <ScrollStyled>
        <Chevron up />
        <ThumbStyled />
        <Chevron />
      </ScrollStyled>
    </GridAreaStyled>
    <PaletteFooterStyled>
      <HelpLinkStyled href="#help">Properties help</HelpLinkStyled>
      <ApplyStyled disabled>Apply</ApplyStyled>
    </PaletteFooterStyled>
  </>
);

const Expander = ({ open, label }) => (
  <ExpanderStyled aria-expanded={open} aria-label={label}>
    <svg width="9" height="9" viewBox="0 0 9 9" shapeRendering="crispEdges" aria-hidden="true">
      <rect x=".5" y=".5" width="8" height="8" fill="#fff" stroke="#8c8c8c" />
      <path d={open ? "M2 4.500h5" : "M2 4.500h5M4.500 2v5"} stroke="#2c4f9e" />
    </svg>
  </ExpanderStyled>
);

const ProjectBrowser = () => {
  // parent guide stops once its last depth-1 row has been drawn
  const lastSection = tree.findIndex((n) => n.depth === 1 && n.last);

  return (
    <>
      <PaletteHeaderStyled>
        Project Browser - Arch.rvt
        <button aria-label="Close project browser">
          <Cross />
        </button>
      </PaletteHeaderStyled>
      <TreeStyled>
        {tree.map((node, i) => (
          <TreeRowStyled key={i} $bold={node.bold}>
            {Array.from({ length: node.depth }, (_, d) => (
              <GuideStyled key={d} $line={d === 0 || i < lastSection ? "full" : null} />
            ))}
            <GuideStyled $wide={node.depth > 0} $branch $line={i === 0 ? null : node.last ? "half" : "full"}>
              {node.open !== undefined && <Expander open={node.open} label={node.label} />}
            </GuideStyled>
            {node.icon && (
              <TreeIconStyled>
                <Icon set={treeIcons} name={node.icon} />
              </TreeIconStyled>
            )}
            <TreeLabelStyled $selected={node.selected}>{node.label}</TreeLabelStyled>
          </TreeRowStyled>
        ))}
      </TreeStyled>
    </>
  );
};

/* ---------- drawings ---------- */

const PlanDrawing = () => (
  <DrawingStyled role="img" aria-label="Ceiling plan, Level 1">
    <g transform="translate(-428 -156)" fill="none" stroke="#000" shapeRendering="crispEdges">
      <path d="M719.500 404v400M846.500 404v400M972.500 404v400M1012.500 404v400" />
      <path d="M643 403.500h370M643 804.500h370" />
      <path d="M680 459.500h333M680 522.500h333M863 586.500h150M680 649.500h333M680 712.500h333M680 775.500h333" />
      <g fill="#fff" stroke="#a6a6a6">
        <path d="M478.500 463.500h263v21h-263z" />
        <path d="M841.500 443.500h21v158h-200v-21h179z" />
        <path d="M657.500 512.500h21v48h-21z" />
        <path d="M441.500 728.500h216v-16h21v16h437v21h-437v11h-21v-11h-216z" />
      </g>
      <path
        d="M671 513.500h2M667 524.500h1M675 526.500h3M667 527.500h2M677.500 524v3M670 531.500h2M667 538.500h4M668 536.500h2M670.500 536v2M674 545.500h1M673 546.500h1M670 549.500h1M673 554.500h2M665 556.500h1"
        stroke="#a6a6a6"
      />
      <path d="M643.500 404v400M679.500 404v400" />
      <path d="M536 574.500h618" />
    </g>
    <g transform="translate(-428 -156)">
      <path d="M447 574.500L492 529l45 45.500z" fill="#003ac0" />
      <circle cx="493" cy="574.500" r="31.500" fill="#fff" stroke="#003ac0" />
      <path d="M447 574.500h90" stroke="#003ac0" shapeRendering="crispEdges" />
      <text x="493" y="565" fontSize="11" fill="#003ac0" textAnchor="middle">-</text>
      <text x="493" y="591" fontSize="14" fill="#003ac0" textAnchor="middle">---</text>
    </g>
  </DrawingStyled>
);

const hatchRows = Array.from({ length: 17 }, (_, i) => 575 + i * 17);

const levelDashes = "M1406 Yh22M1444 Yh54M1514 Yh22M1553 Yh54M1623 Yh22M1661 Yh54M1731 Yh22M1769 Yh67";

const speckle = "M8 6h2M18 5h5M20 6h1M23 11h1M34 3h1M44 2h1M50 8h3M50 9h1M52 9h1M42 15h1M31 17h1M34 16h2M12 19h2M13 23h2M39 19h3M40 20h1M47 27h1M4 31h3M5 32h1M10 31h3M11 32h1M22 30h4M22 31h1M25 31h1M22 32h3M29 32h3M29 33h1M33 29h1M12 42h1M11 43h1M12 44h1M30 40h1M33 40h1M30 44h3M31 43h1M38 40h1M47 38h1M16 49h1M28 48h1M29 51h1M46 49h1M51 51h1M9 54h1M29 54h1";

const slabSpeckle = "M5 2.500h1M17 2.500h3M42 3.500h3M42 5.500h3M42.500 3v3M51 2.500h2M48 8.500h1M68 4.500h2M67 6.500h4M95 2.500h2M104 7.500h1M120 3.500h1M127 6.500h2M150 4.500h1M163 2.500h2M176 3.500h4M190 4.500h2M208 5.500h4M209 4.500h2M221 7.500h1M236 3.500h2M248 8.500h2M262 4.500h1M278 2.500h3M279 3.500h1M289 7.500h2M301 7.500h1M311 6.500h1M317 2.500h2M325 6.500h3M331 4.500h3";

const SectionDrawing = () => (
  <DrawingStyled role="img" aria-label="Section 1">
    <g transform="translate(-1177 -158)">
      <g fill="none" stroke="#000" shapeRendering="crispEdges">
        <path d="M1297.500 217.500h457v723h-457z" />
        <path d="M1209 430.500h627M1209 638.500h566M1829 638.500h7M1209 867.500h627" strokeDasharray="43 11 11 11" strokeDashoffset="9" />
        <path d={`M1209 573.500h72M1298 573.500h21M1336 573.500h63${levelDashes.replaceAll("Y", "573.500")}`} />
        <path d="M1209 847.500h186" />

        {/* cladding, studs and lining */}
        <path d="M1374.500 573v295M1380.500 573v295" />
        <path d="M1387 573v294M1398 573v275" strokeWidth="2" />
        <path d="M1438.500 642v205M1503.500 642v205M1517.500 642v205M1503 642.500h15" />

        {/* suspended ceiling */}
        <path d="M1399 665.500h216" />
        <path d="M1399 669h216" strokeWidth="2" />
        <path d="M1614.500 665v4" />

        {/* slab, damp course and footing */}
        <path d="M1387.500 848.500h341v11h-341z" fill="#c9c9c9" />
        <path d="M1388 848h310" strokeWidth="2" />
        <path d="M1388 860h43v5h9v2h-52z" fill="#000" stroke="none" />
        <path d="M1392 861.500h36M1393 864.500h34" stroke="#fff" strokeDasharray="2 1 1 1 1 2" />
        <path d="M1360.500 867.500h54v55h-54z" fill="#c9c9c9" />
        <path transform="translate(1388 849)" d={slabSpeckle} stroke="#333" />
        <path transform="translate(1360 867.500)" d={speckle} stroke="#333" />

        <path d="M1491.500 661v194" />
      </g>
      <path d="M1487 665l9 9M1487 842l9 10" stroke="#000" />
      {hatchRows.map((y) => (
        <path key={y} d={`M1375 ${y + 1}l5-5M1375 ${y + 5}l5-5`} stroke="#666" />
      ))}

      <rect x="1696" y="834" width="61" height="17" fill="#fff" />
      <text transform="translate(1482 757) rotate(-90)" fontSize="12" textAnchor="middle">2600</text>
      <g fontSize="15" textAnchor="end">
        <text x="1831" y="428">Roof</text>
        <text x="1831" y="444">6096 mm</text>
        <text x="1831" y="652">3048 mm</text>
        <text x="1831" y="881">-305 mm</text>
        <text x="1826" y="848">Level 04 - T.O. Low</text>
        <text x="1831" y="864">Wall</text>
      </g>
      {/* labels drawn later mask the ones beneath them */}
      <rect x="1797" y="647" width="32" height="15" fill="#fff" />
      <rect x="1781" y="829" width="47" height="14" fill="#fff" />
      <rect x="1820" y="852" width="9" height="13" fill="#fff" />
      <rect x="1792" y="851" width="8" height="11" fill="#fff" />
      <g fontSize="14" textAnchor="end">
        <text x="1827" y="567">Level 2</text>
        <text x="1828" y="591">4000</text>
        <text x="1831" y="635">Level 2:</text>
        <text x="1828" y="659">3000</text>
        <text x="1827" y="840">Level 1</text>
        <text x="1801" y="861">0</text>
        <text x="1829" y="864">0</text>
      </g>
      <path
        d={`M1209 642.500h72M1298 642.500h92M1399 642.500h39${levelDashes.replaceAll("Y", "642.500")}M1728 847.500h25M1769 847.500h67`}
        stroke="#000"
        shapeRendering="crispEdges"
      />
    </g>
  </DrawingStyled>
);

const NavBar = () => (
  <NavBarStyled>
    <NavEndStyled aria-label="Close navigation bar">
      <svg width="8" height="8" viewBox="0 0 8 8" aria-hidden="true">
        <circle cx="4" cy="4" r="3.500" fill="#eee" stroke="#999" />
        <path d="M2.500 2.500l3 3M5.500 2.500l-3 3" stroke="#888" />
      </svg>
    </NavEndStyled>
    <NavToolStyled $rule aria-label="2D wheel">
      <svg width="24" height="24" viewBox="0 0 24 24" aria-hidden="true">
        <path d="M19 1v11c0 5-4 8-9 8C5 20 1 16 1 11 1 5 5 1 10 1z" fill="#e6e6e6" stroke="#888" />
        <circle cx="10" cy="10" r="5" fill="#f6f6f6" stroke="#888" />
        <text x="24" y="23" textAnchor="end" fontSize="10" fontWeight="700" fill="#6c9bcb" stroke="#fff" strokeWidth="2" paintOrder="stroke">2D</text>
      </svg>
      <Caret color="#999" />
    </NavToolStyled>
    <NavToolStyled aria-label="Zoom in region">
      <svg width="18" height="18" viewBox="0 0 18 18" overflow="visible" aria-hidden="true">
        <rect x="1.500" y="1.500" width="11" height="11" fill="#b9d3ae" stroke="#8fb381" />
        <circle cx="12" cy="11" r="3.500" fill="#fff" stroke="#999" strokeWidth="1.300" />
        <path d="M14.500 14l3 3.500" stroke="#999" strokeWidth="2" />
      </svg>
      <Caret color="#999" />
    </NavToolStyled>
    <NavEndStyled aria-label="Navigation bar options">
      <svg width="8" height="8" viewBox="0 0 8 8" aria-hidden="true">
        <circle cx="4" cy="4" r="3.500" fill="#eee" stroke="#999" />
        <path d="M2 3.500h4M3 5.500h2" stroke="#888" />
      </svg>
    </NavEndStyled>
  </NavBarStyled>
);

const App = () => {
  const [activeTab, setActiveTab] = useState("Manage");

  return (
    <AppStyled>
      <GlobalStyle />
      <TabStripStyled>
        <TabStyled $file>File</TabStyled>
        {tabs.map((tab) => (
          <TabStyled key={tab} $active={tab === activeTab} onClick={() => setActiveTab(tab)}>
            {tab}
          </TabStyled>
        ))}
        <TabToggleStyled aria-label="Minimize ribbon">
          <svg width="14" height="14" viewBox="0 0 14 14" aria-hidden="true">
            <rect x=".5" y=".5" width="13" height="11" rx="2" fill="#f4f4f4" stroke="#666" />
            <path d="M4 8l3-4 3 4z" fill="#333" />
          </svg>
          <Caret color="#222" />
        </TabToggleStyled>
      </TabStripStyled>

      <Ribbon />

      <WorkspaceStyled>
        <SideStyled>
          <PropertiesPalette />
          <ProjectBrowser />
        </SideStyled>

        <ViewStyled>
          <ViewTabsStyled>
            <ViewTabStyled $active>
              <PlanIcon size={16} />
              <TabNameStyled>Level 1</TabNameStyled>
              <button aria-label="Close Level 1">
                <Cross />
              </button>
            </ViewTabStyled>
            <button aria-label="Open views">
              <svg width="9" height="7" viewBox="0 0 9 7" aria-hidden="true">
                <path d="M0 0h9v1.500H0zM0 3h9L4.500 7z" fill="#333" />
              </svg>
            </button>
          </ViewTabsStyled>
          <CanvasStyled>
            <PlanDrawing />
            <NavBar />
            <ViewScrollStyled>
              <Chevron up />
              <ViewThumbStyled />
            </ViewScrollStyled>
          </CanvasStyled>
        </ViewStyled>

        <ViewStyled $w={661}>
          <ViewTabsStyled>
            <ViewTabStyled>
              <svg width="16" height="16" viewBox="0 0 16 16" aria-hidden="true">
                <path d="M6.500 0v16M6.500 2l7 6-7 6" fill="#9a9a9a" stroke="#9a9a9a" />
                <circle cx="6" cy="8" r="4.500" fill="#e8f0f6" stroke="#9a9a9a" />
              </svg>
              <TabNameStyled>Section 1</TabNameStyled>
            </ViewTabStyled>
          </ViewTabsStyled>
          <CanvasStyled $framed>
            <SectionDrawing />
            <TimerStyled>0:00</TimerStyled>
          </CanvasStyled>
        </ViewStyled>
      </WorkspaceStyled>

      <PointerStyled>
        <svg width="13" height="20" viewBox="0 0 13 20" aria-hidden="true">
          <path d="M.5 1v15l3.500-3.500 3 6.500 2.500-1-3-6h5z" fill="#fff" stroke="#1b1b3a" />
        </svg>
      </PointerStyled>
    </AppStyled>
  );
};

export default App;
